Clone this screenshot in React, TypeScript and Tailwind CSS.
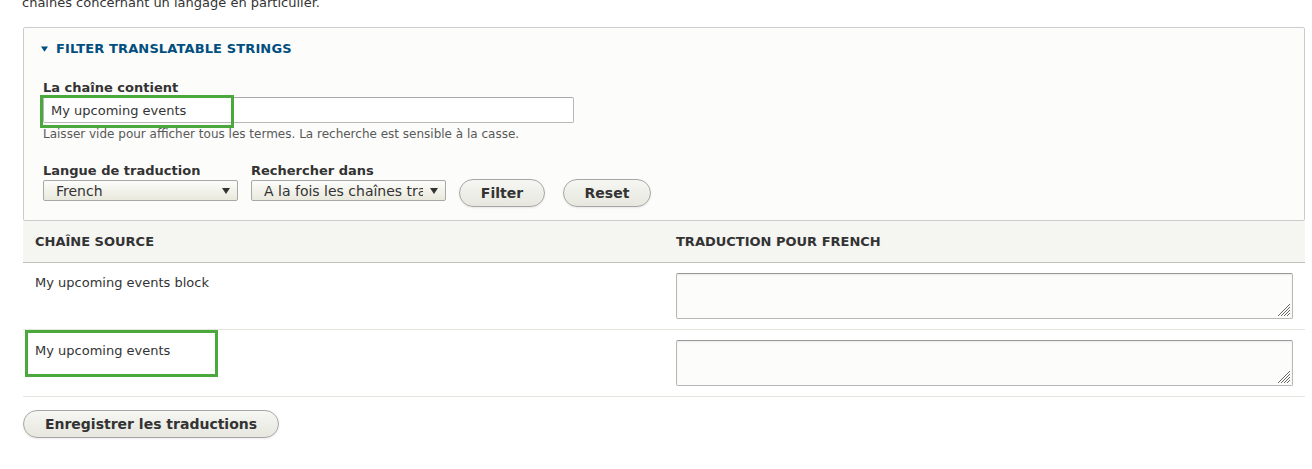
import React from "react";

function Triangle({ className }: { className?: string }) {
  return (
    <svg width="8" height="6" viewBox="0 0 8 6" className={className}>
      <path d="M0 0 L8 0 L4 6 Z" fill="currentColor" />
    </svg>
  );
}

function Resizer() {
  return (
    <svg
      width="16"
      height="16"
      viewBox="0 0 16 16"
      className="absolute right-[1px] bottom-[1px] pointer-events-none"
    >
      <g stroke="#666" strokeWidth="1">
        <line x1="15" y1="3" x2="3" y2="15" />
        <line x1="15" y1="6" x2="6" y2="15" />
        <line x1="15" y1="9" x2="9" y2="15" />
        <line x1="15" y1="12" x2="12" y2="15" />
      </g>
    </svg>
  );
}

function Select({ value, width }: { value: string; width: string }) {
  return (
    <div
      className={`${width} h-[21px] flex items-center border border-[#a8a8a8] rounded-[2px] bg-gradient-to-b from-[#fcfcfa] to-[#e9e9dd] pl-[12px] pr-[7px] overflow-hidden`}
    >
      <span className="flex-1 min-w-0 text-[14px] leading-[18px] text-[#333] whitespace-nowrap overflow-hidden mr-[7px]">
        {value}
      </span>
      <Triangle className="text-[#333] shrink-0" />
    </div>
  );
}

function Button({ label, width }: { label: string; width: string }) {
  return (
    <div
      className={`${width} h-[28px] flex items-center justify-center rounded-full border border-[#a6a6a6] bg-gradient-to-b from-[#f6f6f3] to-[#e7e7df] text-[14px] font-bold text-[#333] shadow-[0_1px_2px_rgba(0,0,0,0.08)]`}
    >
      {label}
    </div>
  );
}

function Textarea() {
  return (
    <div className="relative h-[46px] border border-[#b8b8b8] border-t-[#999] rounded-[2px] bg-[#fcfcfa] shadow-[inset_0_1px_2px_rgba(0,0,0,0.08)]">
      <Resizer />
    </div>
  );
}

export default function App() {
  return (
    <div className="w-[1312px] h-[469px] overflow-hidden bg-white font-['DejaVu_Sans',sans-serif] text-[#333]">
      <div className="pl-[23px] w-[1305px]">
        <p className="mt-[-7px] text-[13px] leading-[20px] text-[#333] -ml-[1px]">
          chaînes concernant un langage en particulier.
        </p>

        {/* Filter details */}
        <div className="mt-[14px] border border-[#ccc] rounded-[2px] bg-[#fcfcfa] h-[194px]">
          <div className="h-[41px] flex items-center pl-[17px] gap-[8px] text-[#004f7f]">
            <Triangle className="w-[7px] h-[6px] mt-[1px]" />
            <span className="text-[13px] font-bold tracking-[0.01em]">
              FILTER TRANSLATABLE STRINGS
            </span>
          </div>
          <div className="pl-[19px] pt-[10px]">
            <div className="text-[13px] font-bold leading-[18px] text-[#333]">
              La chaîne contient
            </div>
            <div className="relative w-[531px]">
              <div className="h-[26px] border border-[#b8b8b8] border-t-[#a8a8a8] rounded-[2px] bg-white flex items-center pl-[7px] pt-[1px] text-[13px] text-[#333]">
                My upcoming events
              </div>
              <div className="absolute left-[-3px] top-[-2px] w-[194px] h-[33px] border-[3px] border-[#4ba83d]" />
            </div>
            <div className="mt-[2px] text-[12px] leading-[18px] text-[#595959]">
              Laisser vide pour afficher tous les termes. La recherche est sensible à la casse.
            </div>
            <div className="mt-[19px] flex items-end">
              <div className="w-[208px]">
                <div className="text-[13px] font-bold leading-[18px] text-[#333]">
                  Langue de traduction
                </div>
                <Select value="French" width="w-[195px]" />
              </div>
              <div className="w-[208px]">
                <div className="text-[13px] font-bold leading-[18px] text-[#333]">
                  Rechercher dans
                </div>
                <Select value="A la fois les chaînes traduites et non traduites" width="w-[195px]" />
              </div>
              <div className="flex gap-[18px] mb-[-6px]">
                <Button label="Filter" width="w-[86px]" />
                <Button label="Reset" width="w-[88px]" />
              </div>
            </div>
          </div>
        </div>

        {/* Table */}
        <div>
          <div className="flex h-[42px] bg-[#f5f5f2] border-b border-[#bfbfba] items-center text-[13px] font-bold text-[#333]">
            <div className="w-1/2 pl-[12px]">CHAÎNE SOURCE</div>
            <div className="w-1/2 pl-[12px]">TRADUCTION POUR FRENCH</div>
          </div>
          <div className="flex border-b border-[#e6e4df] h-[67px]">
            <div className="w-1/2 pl-[12px] pt-[11px] text-[13px] leading-[18px]">
              My upcoming events block
            </div>
            <div className="w-1/2 px-[12px] pt-[10px]">
              <Textarea />
            </div>
          </div>
          <div className="relative flex border-b border-[#e6e4df] h-[67px]">
            <div className="w-1/2 pl-[12px] pt-[12px] text-[13px] leading-[18px]">
              My upcoming events
            </div>
            <div className="w-1/2 px-[12px] pt-[10px]">
              <Textarea />
            </div>
            <div className="absolute left-[2px] top-[0px] w-[193px] h-[47px] border-[3px] border-[#4ba83d]" />
          </div>
        </div>

        <div className="mt-[13px]">
          <Button label="Enregistrer les traductions" width="w-[256px]" />
        </div>
      </div>
    </div>
  );
}
